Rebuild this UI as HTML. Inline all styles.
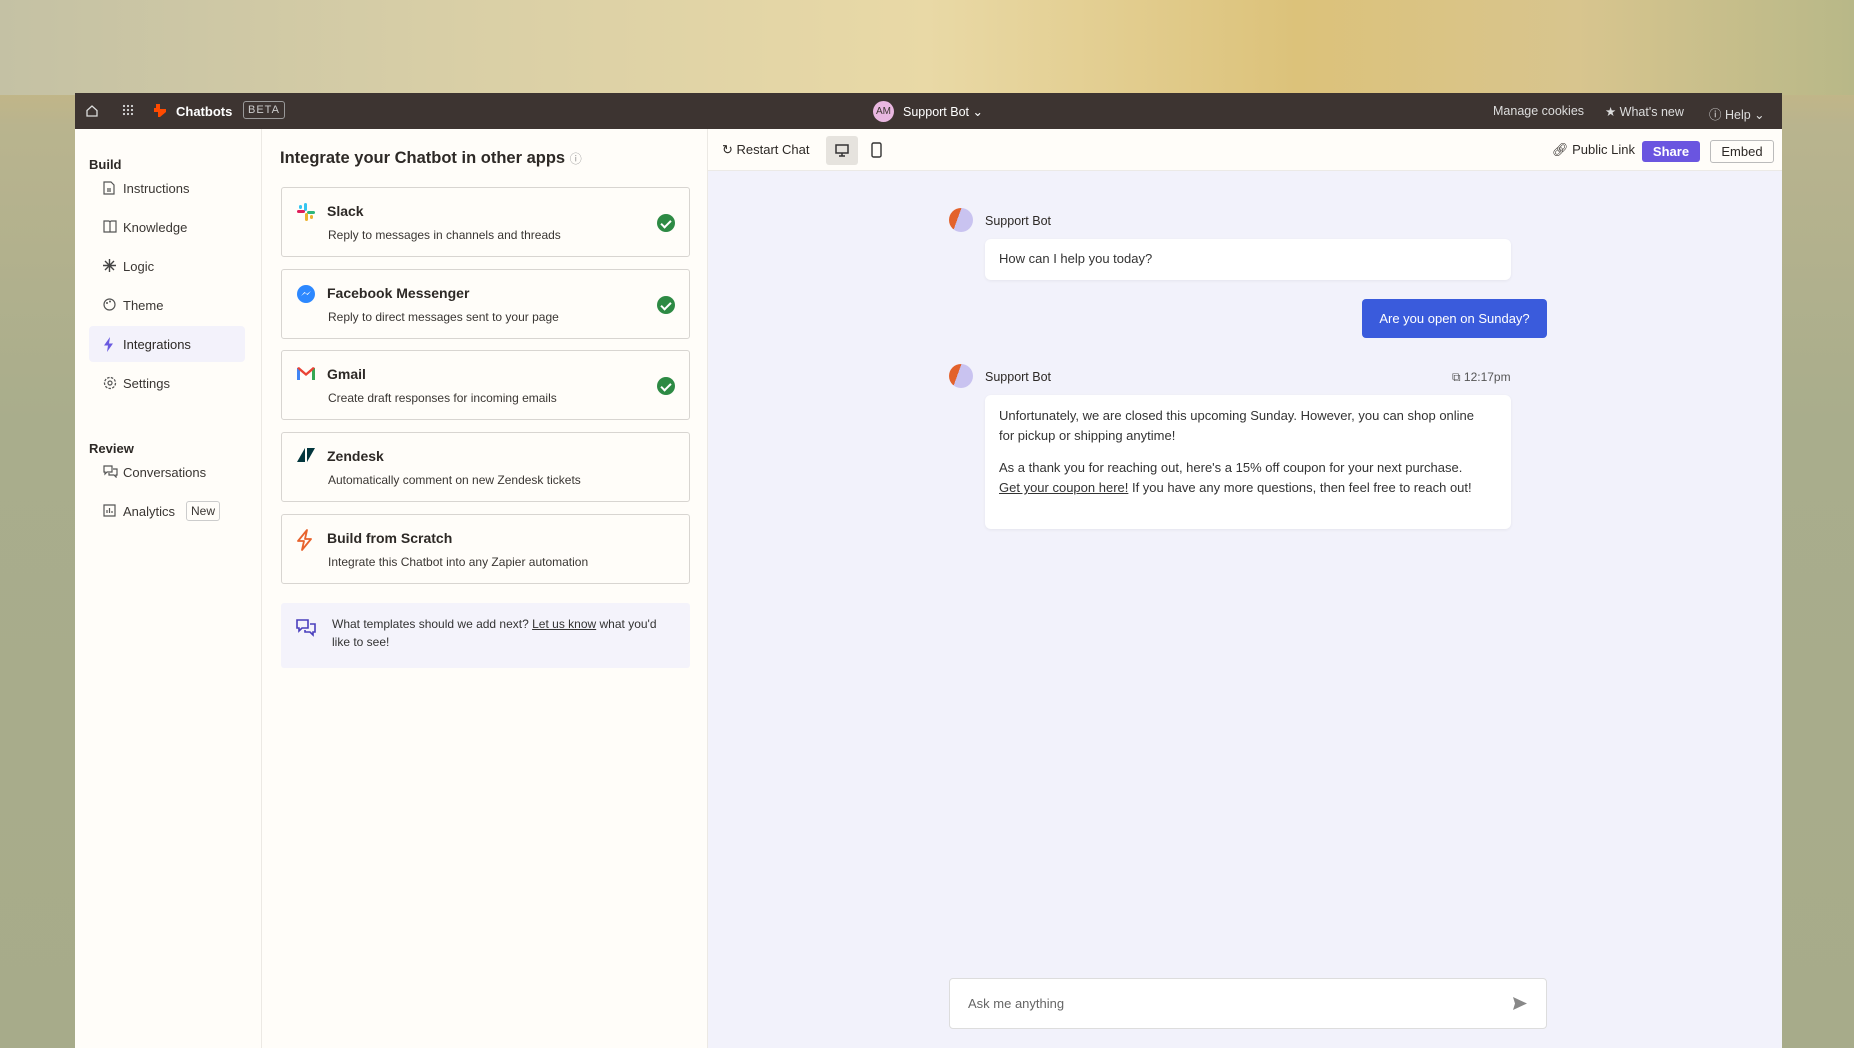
<!DOCTYPE html>
<html><head><meta charset="utf-8"><style>
*{box-sizing:border-box;margin:0;padding:0}
html{overflow:hidden;width:1854px;height:1048px}
body{width:1854px;height:1048px;overflow:hidden;position:relative;font-family:"Liberation Sans",sans-serif;color:#2d2926;
background:linear-gradient(180deg,#d9c89a 0%,#c9b782 6%,#b9b48e 12%,#a9ad8c 40%,#a7ab8a 100%);}
.bgtop{position:absolute;left:0;top:0;width:1854px;height:95px;background:linear-gradient(90deg,#c4c1a4 0%,#d9cfa6 25%,#e9d9a6 50%,#dcc27a 70%,#d8c58e 85%,#b8b888 100%)}
.win{position:absolute;left:75px;top:93px;width:1707px;height:955px;background:#fffdf9;overflow:hidden}
.top{position:absolute;left:0;top:0;width:100%;height:36px;background:#3d3431;color:#fff;font-size:13px}
.top span{position:absolute;top:11px}
.side{position:absolute;left:0;top:36px;width:187px;bottom:0;border-right:1px solid #ece9e4}
.mid{position:absolute;left:187px;top:36px;width:446px;bottom:0;border-right:1px solid #ece9e4}
.right{position:absolute;left:633px;top:36px;right:0;bottom:0;background:#f2f2fb}
.tb{position:absolute;left:0;top:0;right:0;height:42px;background:#fffdf9;border-bottom:1px solid #eceae6;font-size:13px}
.sec{position:absolute;left:14px;font-size:13px;font-weight:bold}
.nav{position:absolute;left:14px;width:156px;height:36px;font-size:13px;color:#3a3633}
.nav svg{position:absolute;left:14px;top:11px}
.nav span{position:absolute;left:34px;top:11px}
.card{position:absolute;left:94px;width:409px;height:70px;border:1.5px solid #d8d5d1;border-radius:3px;background:#fffdf9}
.card .ic{position:absolute;left:14px;top:14px}
.card b{position:absolute;left:45px;top:15px;font-size:14px}
.card p{position:absolute;left:46px;top:40px;font-size:12px;color:#3a3633}
.chk{position:absolute;right:14px;top:26px;width:18px;height:18px;border-radius:50%;background:#2d8a44}
.chk:after{content:"";position:absolute;left:6px;top:3.5px;width:4px;height:8px;border:solid #fff;border-width:0 2px 2px 0;transform:rotate(45deg)}
.av{position:absolute;width:24px;height:24px;border-radius:50%;background:linear-gradient(110deg,#e3622c 0 38%,#c9c3f0 38%)}
.bub{position:absolute;background:#fff;border-radius:6px;box-shadow:0 1px 3px rgba(0,0,0,.06);font-size:13px;color:#333}
</style></head><body>
<div class="bgtop"></div>
<div class="win">
 <div class="top">
  <svg style="position:absolute;left:10px;top:11px" width="14" height="14" viewBox="0 0 14 14"><path d="M2 6.5L7 2l5 4.5V12H2z" fill="none" stroke="#ddd" stroke-width="1.3"/></svg>
  <svg style="position:absolute;left:47px;top:11px" width="12" height="12" viewBox="0 0 12 12" fill="#ddd"><circle cx="2" cy="2" r="1.1"/><circle cx="6" cy="2" r="1.1"/><circle cx="10" cy="2" r="1.1"/><circle cx="2" cy="6" r="1.1"/><circle cx="6" cy="6" r="1.1"/><circle cx="10" cy="6" r="1.1"/><circle cx="2" cy="10" r="1.1"/><circle cx="6" cy="10" r="1.1"/><circle cx="10" cy="10" r="1.1"/></svg>
  <svg style="position:absolute;left:78px;top:10px" width="16" height="15" viewBox="0 0 16 15"><path d="M3 1h4v5h6v3l-6 5H5V9H1V5h2z" fill="#ff4a00"/></svg>
  <span style="left:101px;font-weight:bold">Chatbots</span>
  <span style="left:168px;top:8px;border:1px solid #999;border-radius:3px;padding:2px 4px;font-size:11px;letter-spacing:1px;color:#ccc">BETA</span>
  <div style="position:absolute;left:798px;top:8px;width:21px;height:21px;border-radius:50%;background:#e9b7e0;color:#3d3431;font-size:10px;text-align:center;line-height:21px">AM</div>
  <span style="left:828px;font-size:12.5px">Support Bot ⌄</span>
  <span style="left:1418px;color:#ddd;font-size:12.5px">Manage cookies</span>
  <span style="left:1530px;color:#ddd;font-size:12.5px">★ What's new</span>
  <span style="left:1634px;color:#ddd;font-size:12.5px">ⓘ Help ⌄</span>
 </div>
 <div class="side">
  <div class="sec" style="top:28px">Build</div>
  <div class="nav" style="top:41px"><svg width="12" height="14" viewBox="0 0 12 14"><path d="M1 1h7l3 3v9H1z M4 8h4M4 10h4" fill="none" stroke="#555" stroke-width="1.2"/></svg><span>Instructions</span></div>
  <div class="nav" style="top:80px"><svg width="14" height="13" viewBox="0 0 14 13"><path d="M1 1h5l1 1 1-1h5v11H1zM7 2v10" fill="none" stroke="#555" stroke-width="1.2"/></svg><span>Knowledge</span></div>
  <div class="nav" style="top:119px"><svg width="13" height="13" viewBox="0 0 13 13"><path d="M6.5 0v13M0 6.5h13M2 2l9 9M11 2l-9 9" stroke="#444" stroke-width="1.4"/></svg><span>Logic</span></div>
  <div class="nav" style="top:158px"><svg width="13" height="13" viewBox="0 0 13 13"><circle cx="6.5" cy="6.5" r="5.5" fill="none" stroke="#555" stroke-width="1.2"/><circle cx="4" cy="5" r="1" fill="#555"/><circle cx="7" cy="3.5" r="1" fill="#555"/></svg><span>Theme</span></div>
  <div class="nav" style="top:197px;background:#f3f2fb;border-radius:4px"><svg width="11" height="15" viewBox="0 0 11 15"><path d="M7 0L1 8.5h4L4 15l6-8.5H6z" fill="#6a5ae0"/></svg><span style="color:#2d2926">Integrations</span></div>
  <div class="nav" style="top:236px"><svg width="14" height="14" viewBox="0 0 14 14"><circle cx="7" cy="7" r="5.5" fill="none" stroke="#555" stroke-width="1.3" stroke-dasharray="2.5 1.3"/><circle cx="7" cy="7" r="2" fill="none" stroke="#555" stroke-width="1.2"/></svg><span>Settings</span></div>
  <div class="sec" style="top:312px">Review</div>
  <div class="nav" style="top:325px"><svg width="15" height="13" viewBox="0 0 15 13"><path d="M1 1h8v6H4l-2 2V7H1zM10 4h4v6h-1v2l-2-2H6V8" fill="none" stroke="#555" stroke-width="1.2"/></svg><span>Conversations</span></div>
  <div class="nav" style="top:364px"><svg width="13" height="13" viewBox="0 0 13 13"><path d="M1 1h11v11H1zM4 9V6M6.5 9V4M9 9V7" fill="none" stroke="#555" stroke-width="1.2"/></svg><span>Analytics</span><span style="left:97px;top:8px;border:1px solid #ccc;border-radius:3px;padding:2px 4px;font-size:12px">New</span></div>
 </div>
 <div class="mid">
  <div style="position:absolute;left:18px;top:20px;font-size:16.5px;font-weight:bold">Integrate your Chatbot in other apps <span style="font-weight:normal;font-size:12px;color:#999">ⓘ</span></div>
  <div class="card" style="top:58px;left:19px"><svg class="ic" width="20" height="20" viewBox="0 0 20 20"><rect x="8" y="1" width="3" height="8" rx="1.5" fill="#36c5f0"/><rect x="1" y="8" width="8" height="3" rx="1.5" fill="#e01e5a"/><rect x="11" y="9" width="8" height="3" rx="1.5" fill="#2eb67d"/><rect x="9" y="11" width="3" height="8" rx="1.5" fill="#ecb22e"/><rect x="3" y="3" width="3" height="4" rx="1.5" fill="#36c5f0"/><rect x="14" y="13" width="3" height="4" rx="1.5" fill="#ecb22e"/></svg><b>Slack</b><p>Reply to messages in channels and threads</p><div class="chk"></div></div>
  <div class="card" style="top:140px;left:19px"><svg class="ic" width="20" height="20" viewBox="0 0 20 20"><circle cx="10" cy="10" r="9" fill="#2d88ff"/><path d="M5 12l3.5-4 2.5 2 4-3-3.5 4-2.5-2z" fill="#fff"/></svg><b>Facebook Messenger</b><p>Reply to direct messages sent to your page</p><div class="chk"></div></div>
  <div class="card" style="top:221px;left:19px"><svg class="ic" width="20" height="16" viewBox="0 0 20 16"><path d="M1 3v12h3V6l6 5 6-5v9h3V3l-2-1-7 6-7-6z" fill="#ea4335"/><path d="M1 3v12h3V6z" fill="#4285f4"/><path d="M16 6v9h3V3z" fill="#34a853"/></svg><b>Gmail</b><p>Create draft responses for incoming emails</p><div class="chk"></div></div>
  <div class="card" style="top:303px;left:19px"><svg class="ic" width="20" height="16" viewBox="0 0 20 16"><path d="M9 1L1 15h8V1zM11 1h8L11 15z" fill="#03363d"/></svg><b>Zendesk</b><p>Automatically comment on new Zendesk tickets</p></div>
  <div class="card" style="top:385px;left:19px"><svg class="ic" width="18" height="22" viewBox="0 0 18 22"><path d="M11 1L2 12h6l-2 9 9-11H9z" fill="none" stroke="#e8622c" stroke-width="1.8" stroke-linejoin="round"/></svg><b>Build from Scratch</b><p>Integrate this Chatbot into any Zapier automation</p></div>
  <div style="position:absolute;left:19px;top:474px;width:409px;height:65px;background:#f4f3fb;border-radius:3px">
   <svg style="position:absolute;left:15px;top:16px" width="20" height="18" viewBox="0 0 20 18"><path d="M1 1h11v8H6l-3 3V9H1zM14 5h5v8h-2v3l-3-3H9v-2" fill="none" stroke="#4a3fbd" stroke-width="1.6"/></svg>
   <div style="position:absolute;left:51px;top:12px;font-size:12px;line-height:18px;color:#333">What templates should we add next? <u>Let us know</u> what you'd<br>like to see!</div>
  </div>
 </div>
 <div class="right">
  <div class="tb">
   <span style="position:absolute;left:14px;top:13px">↻ Restart Chat</span>
   <div style="position:absolute;left:118px;top:7px;width:32px;height:29px;background:#e6e3de;border-radius:3px"><svg style="position:absolute;left:9px;top:8px" width="14" height="13" viewBox="0 0 14 13"><path d="M1 1h12v8H1zM7 9v3M4 12h6" fill="none" stroke="#333" stroke-width="1.5"/></svg></div>
   <svg style="position:absolute;left:163px;top:13px" width="11" height="16" viewBox="0 0 11 16"><rect x="1" y="1" width="9" height="14" rx="1.5" fill="none" stroke="#333" stroke-width="1.4"/></svg>
   <span style="position:absolute;left:844px;top:13px">🔗︎ Public Link</span>
   <div style="position:absolute;left:934px;top:12px;width:58px;height:21px;background:#6a55e0;color:#fff;border-radius:3px;text-align:center;line-height:21px;font-weight:bold">Share</div>
   <div style="position:absolute;left:1002px;top:11px;width:64px;height:23px;border:1px solid #bbb;border-radius:3px;text-align:center;line-height:21px">Embed</div>
  </div>
  <div class="av" style="left:241px;top:79px"></div>
  <div style="position:absolute;left:277px;top:85px;font-size:12.5px">Support Bot</div>
  <div class="bub" style="left:277px;top:110px;width:526px;height:41px;padding:12px 14px">How can I help you today?</div>
  <div style="position:absolute;left:654px;top:170px;width:185px;height:39px;background:#3a5bdc;color:#fff;border-radius:4px;font-size:13px;text-align:center;line-height:39px">Are you open on Sunday?</div>
  <div class="av" style="left:241px;top:235px"></div>
  <div style="position:absolute;left:277px;top:241px;font-size:12.5px">Support Bot</div>
  <div style="position:absolute;left:744px;top:241px;font-size:12px;color:#555">⧉ 12:17pm</div>
  <div class="bub" style="left:277px;top:266px;width:526px;height:134px;padding:11px 26px 11px 14px;line-height:20px">Unfortunately, we are closed this upcoming Sunday. However, you can shop online for pickup or shipping anytime!<div style="height:12px"></div>As a thank you for reaching out, here's a 15% off coupon for your next purchase. <u>Get your coupon here!</u> If you have any more questions, then feel free to reach out!</div>
  <div style="position:absolute;left:241px;top:849px;width:598px;height:51px;background:#fff;border:1px solid #ddd;border-radius:4px">
   <span style="position:absolute;left:18px;top:17px;font-size:13px;color:#666">Ask me anything</span>
   <svg style="position:absolute;right:18px;top:17px" width="16" height="15" viewBox="0 0 16 15"><path d="M1 1l14 6.5L1 14l2-6.5z" fill="#888"/></svg>
  </div>
 </div>
</div>
</body></html>
